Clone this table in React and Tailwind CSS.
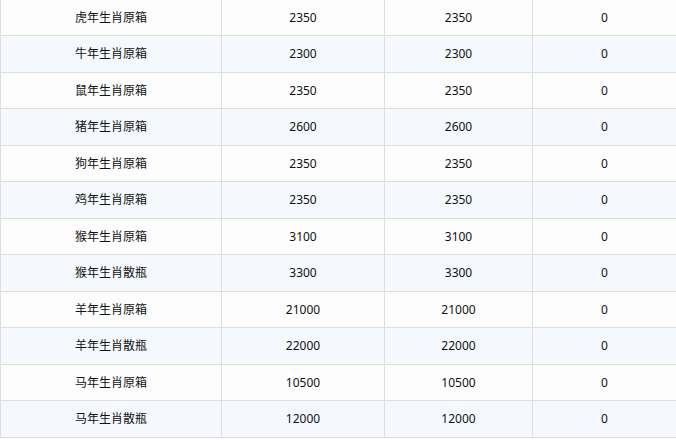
const rows = [
  ["虎年生肖原箱", "2350", "2350", "0"],
  ["牛年生肖原箱", "2300", "2300", "0"],
  ["鼠年生肖原箱", "2350", "2350", "0"],
  ["猪年生肖原箱", "2600", "2600", "0"],
  ["狗年生肖原箱", "2350", "2350", "0"],
  ["鸡年生肖原箱", "2350", "2350", "0"],
  ["猴年生肖原箱", "3100", "3100", "0"],
  ["猴年生肖散瓶", "3300", "3300", "0"],
  ["羊年生肖原箱", "21000", "21000", "0"],
  ["羊年生肖散瓶", "22000", "22000", "0"],
  ["马年生肖原箱", "10500", "10500", "0"],
  ["马年生肖散瓶", "12000", "12000", "0"],
];

export default function App() {
  return (
    <div
      className="w-[676px] h-[440px] overflow-hidden bg-white text-[12px] text-[#111111]"
      style={{ fontFamily: '"Noto Sans", "Noto Sans CJK SC", sans-serif' }}
    >
      <div className="border-t border-[#e0e0e0] h-0" />
      <div className="-mt-[1.5px]">
        {rows.map((r, i) => (
          <div
            key={i}
            className={`grid grid-cols-[222px_163px_148px_1fr] h-[36.5px] border-b border-[#dedede] ${
              i % 2 === 0 ? "bg-[#fdfdfd]" : "bg-[#f5f9fe]"
            }`}
          >
            <div className="flex items-center justify-center pt-[1px] border-l border-r border-[#dedede]">{r[0]}</div>
            <div className="flex items-center justify-center pt-[1px] border-r border-[#dedede]">{r[1]}</div>
            <div className="flex items-center justify-center pt-[1px] border-r border-[#dedede]">{r[2]}</div>
            <div className="flex items-center justify-center pt-[1px]">{r[3]}</div>
          </div>
        ))}
      </div>
    </div>
  );
}
